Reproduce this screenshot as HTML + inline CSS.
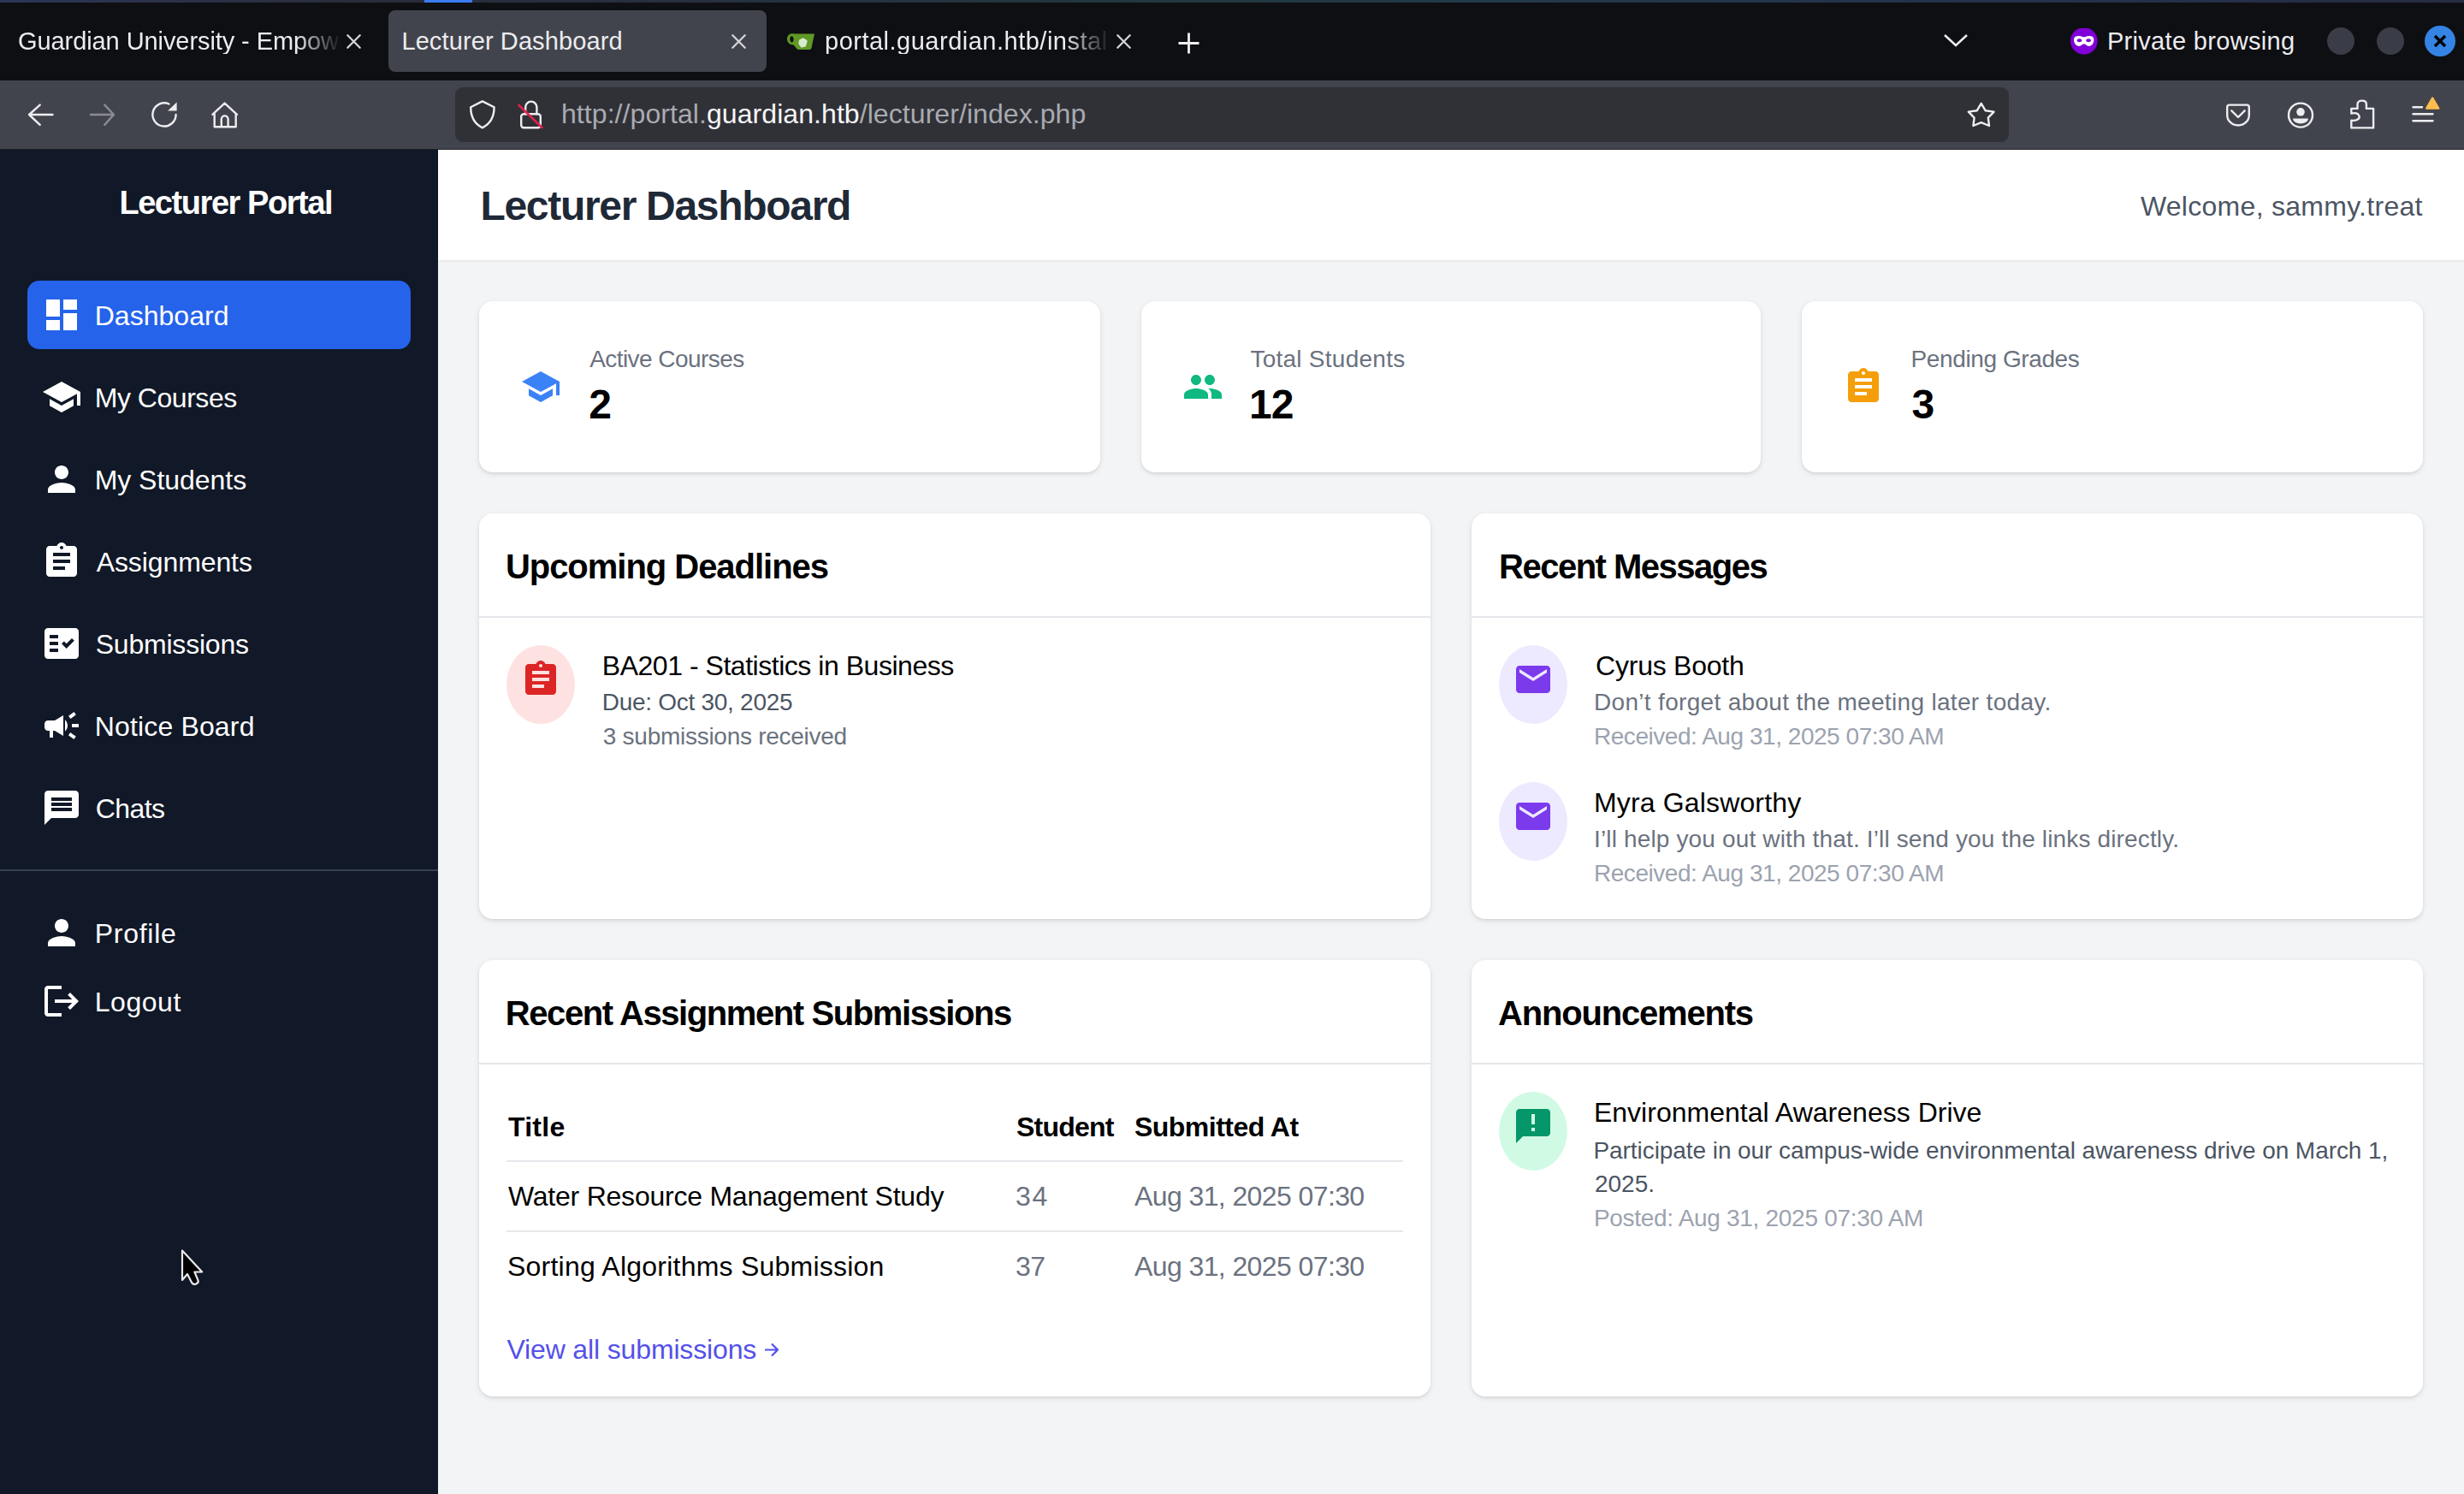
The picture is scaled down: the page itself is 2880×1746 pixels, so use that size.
<!DOCTYPE html>
<html><head><meta charset="utf-8">
<style>
*{box-sizing:border-box;margin:0;padding:0}
html,body{width:2880px;height:1746px;overflow:hidden;background:#f3f4f6;font-family:"Liberation Sans",sans-serif}
.abs{position:absolute}
.t{position:absolute;white-space:nowrap;line-height:1}
svg{display:block}
/* chrome */
#topstrip{left:0;top:0;width:2880px;height:3px;background:linear-gradient(90deg,#2b3556 0%,#2a2d3a 14%,#26303f 30%,#21393f 50%,#22394a 62%,#24324a 80%,#262c44 100%)}
#tabbar{left:0;top:3px;width:2880px;height:91px;background:#0e0f13}
#toolbar{left:0;top:94px;width:2880px;height:81px;background:#42444d}
#urlbar{left:532px;top:102px;width:1816px;height:64px;background:#303137;border-radius:9px}
/* sidebar */
#sidebar{left:0;top:175px;width:512px;height:1571px;background:#111827}
.nav{position:absolute;left:32px;width:448px;height:80px;border-radius:14px}
.nav.active{background:#2563eb}
.nav svg{position:absolute;left:16px;top:16px;width:48px;height:48px;fill:#fff}
.nav .lbl{position:absolute;left:79px;color:#fff;font-size:32px;line-height:1;white-space:nowrap}
/* main */
#header{left:512px;top:175px;width:2368px;height:129px;background:#fff;box-shadow:0 1px 3px rgba(0,0,0,.07)}
.card{position:absolute;background:#fff;border-radius:16px;box-shadow:0 2px 6px rgba(0,0,0,.1),0 2px 4px -2px rgba(0,0,0,.1)}
.card .hd{position:absolute;left:0;top:0;width:100%;height:122px;border-bottom:2px solid #e5e7eb}
.ttl{position:absolute;left:30px;font-size:40px;font-weight:bold;color:#000;white-space:nowrap;line-height:1}
.circ{position:absolute;width:80px;height:92px;border-radius:50%}
.circ svg{position:absolute;left:16px;top:16px;width:48px;height:48px}
@media (max-width:1500px){html{zoom:.5}}
</style></head>
<body>
<!-- ============ BROWSER CHROME ============ -->
<div id="topstrip" class="abs"></div>
<div class="abs" style="left:496px;top:0;width:56px;height:3px;background:#3b7cf6"></div>
<div id="tabbar" class="abs"></div>
<!-- tab1 -->
<div class="t" style="left:21px;top:34px;font-size:29px;color:#ececef;letter-spacing:-0.08px;width:378px;overflow:hidden;-webkit-mask-image:linear-gradient(90deg,#000 86%,transparent 100%)">Guardian University - Empowering</div>
<svg class="abs" style="left:403px;top:38px" width="21" height="21" viewBox="0 0 21 21"><path d="M3.3 3.3L17.7 17.7M17.7 3.3L3.3 17.7" stroke="#d4d4d8" stroke-width="2.3" stroke-linecap="round"/></svg>
<!-- tab2 active -->
<div class="abs" style="left:454px;top:12px;width:442px;height:72px;background:#42444d;border-radius:8px"></div>
<div id="tab2" class="t" style="left:469.4px;top:34px;font-size:29px;color:#ececef;letter-spacing:0.11px">Lecturer Dashboard</div>
<svg class="abs" style="left:853px;top:38px" width="21" height="21" viewBox="0 0 21 21"><path d="M3.3 3.3L17.7 17.7M17.7 3.3L3.3 17.7" stroke="#d4d4d8" stroke-width="2.3" stroke-linecap="round"/></svg>
<!-- tab3 -->
<svg class="abs" style="left:918px;top:36px" width="36" height="26" viewBox="0 0 36 26"><path fill="#609926" fill-rule="evenodd" d="M8 3.3C4.6 3.3 2 6 2 9.6 2 13.6 5 16.4 9.6 16.6L13.5 21.2C14.2 21.8 15 22 16 22H28C29.3 22 30.2 21.2 30.5 20L34 3.6H11.5C10.5 3.4 9.3 3.3 8 3.3zM7.3 6.2C8.6 6.2 9.6 8 9.6 10.1S8.8 13.6 7.6 13.6 5.3 11.9 5.3 9.8 6 6.2 7.3 6.2z"/><path d="M17 11.5L20.5 9.5L24.5 12L23 17.5L19 18.5L16.5 15z" fill="#d9ebcf" stroke="#d9ebcf" stroke-width="2.2" stroke-linejoin="round"/></svg>
<div class="t" style="left:964px;top:34px;font-size:29px;color:#ececef;letter-spacing:0.5px;width:334px;overflow:hidden;-webkit-mask-image:linear-gradient(90deg,#000 84%,transparent 100%)">portal.guardian.htb/installer</div>
<svg class="abs" style="left:1303px;top:38px" width="21" height="21" viewBox="0 0 21 21"><path d="M3.3 3.3L17.7 17.7M17.7 3.3L3.3 17.7" stroke="#d4d4d8" stroke-width="2.3" stroke-linecap="round"/></svg>
<svg class="abs" style="left:1376px;top:37px" width="27" height="27" viewBox="0 0 27 27"><path d="M13.5 1.5V25.5M1.5 13.5H25.5" stroke="#f0f0f2" stroke-width="2.8"/></svg>
<!-- right side -->
<svg class="abs" style="left:2271px;top:38px" width="30" height="18" viewBox="0 0 30 18"><path d="M2 3L15 15L28 3" stroke="#ececef" stroke-width="2.6" fill="none"/></svg>
<svg class="abs" style="left:2420px;top:33px" width="32" height="32" viewBox="0 0 32 32"><circle cx="15.8" cy="14.9" r="15.8" fill="#8000d7"/><path fill="#fff" fill-rule="evenodd" d="M4 13.5C4 10 6.5 8.9 10 8.9 13 8.9 14 10.3 15.8 10.3S18.6 8.9 21.6 8.9C25 8.9 27.4 10 27.4 13.5 27.4 17.5 25 20.9 21.6 20.9 18.8 20.9 17.8 18.3 15.8 18.3S12.8 20.9 10 20.9C6.6 20.9 4 17.5 4 13.5zM10.5 12.3C8.9 12.3 7.6 13.2 7.6 14.3S8.9 16.3 10.5 16.3 13.4 15.4 13.4 14.3 12.1 12.3 10.5 12.3zM21.1 12.3C19.5 12.3 18.2 13.2 18.2 14.3S19.5 16.3 21.1 16.3 24 15.4 24 14.3 22.7 12.3 21.1 12.3z"/></svg>
<div id="priv" class="t" style="left:2462.9px;top:34px;font-size:29px;color:#ececef;letter-spacing:0.32px">Private browsing</div>
<div class="abs" style="left:2720px;top:32px;width:32px;height:32px;border-radius:50%;background:#3a3c47"></div>
<div class="abs" style="left:2778px;top:32px;width:32px;height:32px;border-radius:50%;background:#3a3c47"></div>
<div class="abs" style="left:2834px;top:30px;width:36px;height:36px;border-radius:50%;background:#3584e4"></div>
<svg class="abs" style="left:2834px;top:30px" width="36" height="36" viewBox="0 0 36 36"><path d="M12 12L24 24M24 12L12 24" stroke="#000" stroke-width="3.4"/></svg>

<div id="toolbar" class="abs"></div>
<div class="abs" style="left:0;top:174px;width:2880px;height:1px;background:#1f2026"></div>
<div id="urlbar" class="abs"></div>
<svg class="abs" style="left:0;top:94px" width="2880" height="81" viewBox="0 94 2880 81">
<g stroke="#ededf0" stroke-width="2.4" fill="none" stroke-linecap="round" stroke-linejoin="round">
<path d="M34 134H61.5M46.7 122.6L34 134L46.7 145.9"/>
<path d="M133 134H106M122.3 122.6L133 134L122.3 145.9" stroke="#8b8c92"/>
<path d="M205.6 134A13.6 13.6 0 1 1 197.5 121.5"/>
<path d="M250.7 133.5V148.2H275.7V133.5M248.4 133.8L262.6 120.6L277 133.8M258.8 148.2V139.3A3.9 3.9 0 0 1 266.6 139.3V148.2"/>
<path d="M563.8 118.4L550.2 125.3C550.2 137 554 144.5 563.8 149.3C573.6 144.5 577.6 137 577.6 125.3Z"/>
<rect x="609.2" y="133.2" width="22.6" height="16" rx="3"/>
<path d="M614.2 133.2V125.2A6.6 6.6 0 0 1 627.4 125.2V133.2"/>
<path d="M2315.7 120.9L2320.6 129.2L2330.6 130.6L2323.8 137.7L2325 147L2315.7 143.2L2306.4 147L2307.6 137.7L2300.8 130.6L2310.8 129.2Z"/>
<path d="M2603.2 125A2.5 2.5 0 0 1 2605.7 122.6H2626.3A2.5 2.5 0 0 1 2628.8 125V134.5A12.8 12 0 0 1 2603.2 134.5Z"/>
<path d="M2608.3 129.3L2616 137L2623.7 129.3"/>
<circle cx="2689" cy="134.6" r="14"/>
<path d="M2748.3 149.4V140.8C2755 141.5 2758.5 138.5 2757.5 135.6C2756.5 132.8 2753 131.5 2748.3 132.6V126.9H2755.5V121.8C2755.5 119 2758 117.6 2760.7 117.6C2763.5 117.6 2765.9 119 2765.9 121.8V126.9H2774.1V149.4Z"/>
<path d="M2820.5 125.3H2831M2820.5 133.3H2843.5M2820.5 141.2H2843.5"/>
</g>
<path d="M196.1 129.4L206.6 119.6V129.4Z" fill="#ededf0"/>
<path d="M606.3 122.8L633.5 149" stroke="#e0234a" stroke-width="2.6" stroke-linecap="round"/>
<circle cx="2689" cy="130.8" r="4.8" fill="#ededf0"/>
<path d="M2680 138.4H2698A9 6.2 0 0 1 2680 138.4Z" fill="#ededf0"/>
<path d="M2843.2 114.6L2850.2 126.6H2836.2Z" fill="#ffbd4f" stroke="#ffbd4f" stroke-width="2.4" stroke-linejoin="round"/>
</svg>
<div id="url" class="t" style="left:656px;top:117px;font-size:32px;color:#a9aab0;letter-spacing:0.07px">http://portal.<span style="color:#f6f6f8">guardian.htb</span>/lecturer/index.php</div>

<!-- ============ SIDEBAR ============ -->
<div id="sidebar" class="abs"></div>
<div id="lp" class="t" style="left:139.4px;top:218px;font-size:38px;font-weight:bold;color:#fff;letter-spacing:-1.44px">Lecturer Portal</div>
<div class="nav active" style="top:328px"><svg viewBox="0 0 24 24"><path d="M3 13h8V3H3v10zm0 8h8v-6H3v6zm10 0h8V11h-8v10zm0-18v6h8V3h-8z"/></svg><div id="n_dash" class="lbl" style="top:25px;left:78.7px;letter-spacing:0.03px">Dashboard</div></div>
<div class="nav" style="top:424px"><svg viewBox="0 0 24 24"><path d="M5 13.18v4L12 21l7-3.82v-4L12 17l-7-3.82zM12 3L1 9l11 6 9-4.91V17h2V9L12 3z"/></svg><div id="n_cour" class="lbl" style="top:25px;left:78.7px;letter-spacing:-0.46px">My Courses</div></div>
<div class="nav" style="top:520px"><svg viewBox="0 0 24 24"><path d="M12 12c2.21 0 4-1.79 4-4s-1.79-4-4-4-4 1.79-4 4 1.79 4 4 4zm0 2c-2.67 0-8 1.34-8 4v2h16v-2c0-2.66-5.33-4-8-4z"/></svg><div id="n_stud" class="lbl" style="top:25px;left:78.7px;letter-spacing:-0.04px">My Students</div></div>
<div class="nav" style="top:616px"><svg viewBox="0 0 24 24"><path d="M19 3h-4.18C14.4 1.84 13.3 1 12 1c-1.3 0-2.4.84-2.82 2H5c-1.1 0-2 .9-2 2v14c0 1.1.9 2 2 2h14c1.1 0 2-.9 2-2V5c0-1.1-.9-2-2-2zm-7 0c.55 0 1 .45 1 1s-.45 1-1 1-1-.45-1-1 .45-1 1-1zm2 14H7v-2h7v2zm3-4H7v-2h10v2zm0-4H7V7h10v2z"/></svg><div id="n_asg" class="lbl" style="top:25px;left:80.7px;letter-spacing:-0.1px">Assignments</div></div>
<div class="nav" style="top:712px"><svg viewBox="0 0 24 24"><path d="M20 3H4c-1.1 0-2 .9-2 2v14c0 1.1.9 2 2 2h16c1.1 0 2-.9 2-2V5c0-1.1-.9-2-2-2zM10 17H5v-2h5v2zm0-4H5v-2h5v2zm0-4H5V7h5v2zm4.82 6L12 12.16l1.41-1.41 1.41 1.42L17.99 9l1.42 1.42L14.82 15z"/></svg><div id="n_sub" class="lbl" style="top:25px;left:79.7px;letter-spacing:-0.21px">Submissions</div></div>
<div class="nav" style="top:808px"><svg viewBox="0 0 24 24"><path d="M18 11v2h4v-2h-4zm-2 6.61c.96.71 2.21 1.65 3.2 2.39.4-.53.8-1.07 1.2-1.6-.99-.74-2.24-1.68-3.2-2.4-.4.54-.8 1.08-1.2 1.61zM20.4 5.6c-.4-.53-.8-1.07-1.2-1.6-.99.74-2.24 1.680-3.2 2.4.4.53.8 1.07 1.2 1.6.96-.72 2.21-1.65 3.2-2.4zM4 9c-1.1 0-2 .9-2 2v2c0 1.1.9 2 2 2h1v4h2v-4h1l5 3V6L8 9H4zm11.5 3c0-1.33-.58-2.53-1.5-3.35v6.69c.92-.81 1.5-2.01 1.5-3.34z"/></svg><div id="n_not" class="lbl" style="top:25px;left:78.7px;letter-spacing:0.16px">Notice Board</div></div>
<div class="nav" style="top:904px"><svg viewBox="0 0 24 24"><path d="M20 2H4c-1.1 0-1.99.9-1.99 2L2 22l4-4h14c1.1 0 2-.9 2-2V4c0-1.1-.9-2-2-2zm-2 12H6v-2h12v2zm0-3H6V9h12v2zm0-3H6V6h12v2z"/></svg><div id="n_chat" class="lbl" style="top:25px;left:79.7px;letter-spacing:-0.55px">Chats</div></div>
<div class="abs" style="left:0;top:1016px;width:512px;height:2px;background:#374151"></div>
<div class="nav" style="top:1050px"><svg viewBox="0 0 24 24"><path d="M12 12c2.21 0 4-1.79 4-4s-1.79-4-4-4-4 1.79-4 4 1.79 4 4 4zm0 2c-2.67 0-8 1.34-8 4v2h16v-2c0-2.66-5.33-4-8-4z"/></svg><div id="n_prof" class="lbl" style="top:25px;left:78.7px;letter-spacing:0.73px">Profile</div></div>
<div class="nav" style="top:1130px"><svg viewBox="0 0 24 24"><path d="M17 7l-1.41 1.41L18.17 11H8v2h10.17l-2.58 2.58L17 17l5-5zM4 5h8V3H4c-1.1 0-2 .9-2 2v14c0 1.1.9 2 2 2h8v-2H4V5z"/></svg><div id="n_out" class="lbl" style="top:25px;left:78.7px;letter-spacing:0.56px">Logout</div></div>
<!-- cursor -->
<svg class="abs" style="left:210px;top:1459px" width="30" height="44" viewBox="0 0 30 44"><path d="M3 2.5V37L9 30L14.3 40.2Q15.8 42.6 18.8 41.6L20 41Q22.4 39.6 21.4 37.2L17.4 27.5H26.2Z" fill="#000" stroke="#e8e8ea" stroke-width="2.2" stroke-linejoin="round"/></svg>

<!-- ============ HEADER ============ -->
<div id="header" class="abs"></div>
<div id="h1" class="t" style="left:561.4px;top:217px;font-size:48px;font-weight:bold;color:#1f2937;letter-spacing:-1.3px">Lecturer Dashboard</div>
<div id="welcome" class="t" style="left:2501.9px;top:225px;font-size:32px;color:#4b5563;letter-spacing:0.28px">Welcome, sammy.treat</div>

<!-- ============ STAT CARDS ============ -->
<div class="card" style="left:560px;top:352px;width:726px;height:200px">
  <svg class="abs" style="left:48px;top:76px;fill:#3b82f6" width="48" height="48" viewBox="0 0 24 24"><path d="M5 13.18v4L12 21l7-3.82v-4L12 17l-7-3.82zM12 3L1 9l11 6 9-4.91V17h2V9L12 3z"/></svg>
  <div id="ac" class="t" style="left:129.2px;top:54px;font-size:28px;color:#6b7280;letter-spacing:-0.56px">Active Courses</div>
  <div id="num2" class="t" style="left:128.2px;top:97px;font-size:48px;font-weight:bold;color:#000;letter-spacing:4px">2</div>
</div>
<div class="card" style="left:1334px;top:352px;width:724px;height:200px">
  <svg class="abs" style="left:48px;top:76px;fill:#10b981" width="48" height="48" viewBox="0 0 24 24"><path d="M16 11c1.66 0 2.99-1.34 2.99-3S17.66 5 16 5c-1.66 0-3 1.34-3 3s1.34 3 3 3zm-8 0c1.66 0 2.99-1.34 2.99-3S9.66 5 8 5C6.34 5 5 6.340 5 8s1.34 3 3 3zm0 2c-2.33 0-7 1.17-7 3.5V19h14v-2.5c0-2.33-4.67-3.5-7-3.5zm8 0c-.29 0-.62.02-.97.05 1.16.84 1.97 1.97 1.97 3.45V19h6v-2.5c0-2.33-4.67-3.5-7-3.5z"/></svg>
  <div id="ts" class="t" style="left:127.4px;top:54px;font-size:28px;color:#6b7280;letter-spacing:0.26px">Total Students</div>
  <div id="num12" class="t" style="left:126px;top:97px;font-size:48px;font-weight:bold;color:#000;letter-spacing:-1px">12</div>
</div>
<div class="card" style="left:2106px;top:352px;width:726px;height:200px">
  <svg class="abs" style="left:48px;top:76px;fill:#f59e0b" width="48" height="48" viewBox="0 0 24 24"><path d="M19 3h-4.18C14.4 1.84 13.3 1 12 1c-1.3 0-2.4.84-2.82 2H5c-1.1 0-2 .9-2 2v14c0 1.1.9 2 2 2h14c1.1 0 2-.9 2-2V5c0-1.1-.9-2-2-2zm-7 0c.55 0 1 .45 1 1s-.45 1-1 1-1-.45-1-1 .45-1 1-1zm2 14H7v-2h7v2zm3-4H7v-2h10v2zm0-4H7V7h10v2z"/></svg>
  <div id="pg" class="t" style="left:127.6px;top:54px;font-size:28px;color:#6b7280;letter-spacing:-0.4px">Pending Grades</div>
  <div id="num3" class="t" style="left:128.6px;top:97px;font-size:48px;font-weight:bold;color:#000;letter-spacing:0.6px">3</div>
</div>

<!-- ============ ROW 2 ============ -->
<div class="card" style="left:560px;top:600px;width:1112px;height:474px">
  <div class="hd"></div>
  <div id="up" class="ttl" style="top:42px;letter-spacing:-1.03px;left:30.9px">Upcoming Deadlines</div>
  <div class="circ" style="left:32px;top:154px;background:#fee2e2"><svg viewBox="0 0 24 24" style="fill:#dc2626"><path d="M19 3h-4.18C14.4 1.84 13.3 1 12 1c-1.3 0-2.4.84-2.82 2H5c-1.1 0-2 .9-2 2v14c0 1.1.9 2 2 2h14c1.1 0 2-.9 2-2V5c0-1.1-.9-2-2-2zm-7 0c.55 0 1 .45 1 1s-.45 1-1 1-1-.45-1-1 .45-1 1-1zm2 14H7v-2h7v2zm3-4H7v-2h10v2zm0-4H7V7h10v2z"/></svg></div>
  <div id="ba" class="t" style="left:143.8px;top:162px;font-size:32px;color:#000;letter-spacing:-0.47px">BA201 - Statistics in Business</div>
  <div id="due" class="t" style="left:143.8px;top:207px;font-size:28px;color:#4b5563;letter-spacing:-0.28px">Due: Oct 30, 2025</div>
  <div id="subr" class="t" style="left:144.8px;top:247px;font-size:28px;color:#6b7280;letter-spacing:-0.27px">3 submissions received</div>
</div>
<div class="card" style="left:1720px;top:600px;width:1112px;height:474px">
  <div class="hd"></div>
  <div id="rm" class="ttl" style="top:42px;letter-spacing:-1.51px;left:32.1px">Recent Messages</div>
  <div class="circ" style="left:32px;top:154px;background:#ede9fe"><svg viewBox="0 0 24 24" style="fill:#7c3aed"><path d="M20 4H4c-1.1 0-1.99.9-1.99 2L2 18c0 1.1.9 2 2 2h16c1.1 0 2-.9 2-2V6c0-1.1-.9-2-2-2zm0 4l-8 5-8-5V6l8 5 8-5v2z"/></svg></div>
  <div id="cy" class="t" style="left:145.1px;top:162px;font-size:32px;color:#000;letter-spacing:-0.24px">Cyrus Booth</div>
  <div id="dont" class="t" style="left:143px;top:207px;font-size:28px;color:#6b7280;letter-spacing:0.32px">Don’t forget about the meeting later today.</div>
  <div id="rec1" class="t" style="left:143px;top:247px;font-size:28px;color:#9ca3af;letter-spacing:-0.46px">Received: Aug 31, 2025 07:30 AM</div>
  <div class="circ" style="left:32px;top:314px;background:#ede9fe"><svg viewBox="0 0 24 24" style="fill:#7c3aed"><path d="M20 4H4c-1.1 0-1.99.9-1.99 2L2 18c0 1.1.9 2 2 2h16c1.1 0 2-.9 2-2V6c0-1.1-.9-2-2-2zm0 4l-8 5-8-5V6l8 5 8-5v2z"/></svg></div>
  <div id="myra" class="t" style="left:143px;top:322px;font-size:32px;color:#000;letter-spacing:0.15px">Myra Galsworthy</div>
  <div id="ill" class="t" style="left:143px;top:367px;font-size:28px;color:#6b7280;letter-spacing:0.15px">I’ll help you out with that. I’ll send you the links directly.</div>
  <div id="rec2" class="t" style="left:143px;top:407px;font-size:28px;color:#9ca3af;letter-spacing:-0.46px">Received: Aug 31, 2025 07:30 AM</div>
</div>

<!-- ============ ROW 3 ============ -->
<div class="card" style="left:560px;top:1122px;width:1112px;height:510px">
  <div class="hd"></div>
  <div id="ras" class="ttl" style="top:42px;letter-spacing:-1.41px;left:30.8px">Recent Assignment Submissions</div>
  <div id="th1" class="t" style="left:34px;top:179px;font-size:32px;font-weight:bold;color:#000;letter-spacing:0.25px">Title</div>
  <div id="th2" class="t" style="left:628px;top:179px;font-size:32px;font-weight:bold;color:#000;letter-spacing:-0.78px">Student</div>
  <div id="th3" class="t" style="left:766px;top:179px;font-size:32px;font-weight:bold;color:#000;letter-spacing:-0.53px">Submitted At</div>
  <div class="abs" style="left:32px;top:234px;width:1048px;height:2px;background:#e5e7eb"></div>
  <div id="r1c1" class="t" style="left:34px;top:260px;font-size:32px;color:#000;letter-spacing:-0.23px">Water Resource Management Study</div>
  <div id="r1c2" class="t" style="left:627px;top:260px;font-size:32px;color:#6b7280;letter-spacing:1.7px">34</div>
  <div id="r1c3" class="t" style="left:766px;top:260px;font-size:32px;color:#6b7280;letter-spacing:-0.6px">Aug 31, 2025 07:30</div>
  <div class="abs" style="left:32px;top:316px;width:1048px;height:2px;background:#e5e7eb"></div>
  <div id="r2c1" class="t" style="left:33px;top:342px;font-size:32px;color:#000;letter-spacing:0.23px">Sorting Algorithms Submission</div>
  <div id="r2c2" class="t" style="left:627px;top:342px;font-size:32px;color:#6b7280;letter-spacing:-0.5px">37</div>
  <div id="r2c3" class="t" style="left:766px;top:342px;font-size:32px;color:#6b7280;letter-spacing:-0.6px">Aug 31, 2025 07:30</div>
  <div id="view" class="t" style="left:32.4px;top:439px;font-size:32px;color:#5450ea;letter-spacing:-0.14px">View all submissions</div><svg class="abs" style="left:332px;top:446px" width="20" height="19" viewBox="0 0 20 19"><path d="M2 9.5H17M10 2.5L17 9.5L10 16.5" stroke="#5450ea" stroke-width="2.2" fill="none"/></svg>
</div>
<div class="card" style="left:1720px;top:1122px;width:1112px;height:510px">
  <div class="hd"></div>
  <div id="ann" class="ttl" style="top:42px;letter-spacing:-1.2px;left:31.1px">Announcements</div>
  <div class="circ" style="left:32px;top:154px;background:#d1fae5"><svg viewBox="0 0 24 24" style="fill:#059669"><path d="M20 2H4c-1.1 0-1.99.9-1.99 2L2 22l4-4h14c1.1 0 2-.9 2-2V4c0-1.1-.9-2-2-2zm-7 9h-2V5h2v6zm0 4h-2v-2h2v2z"/></svg></div>
  <div id="env" class="t" style="left:142.9px;top:162px;font-size:32px;color:#000;letter-spacing:0.02px">Environmental Awareness Drive</div>
  <div id="part" class="t" style="left:142.5px;top:209px;font-size:28px;color:#4b5563;letter-spacing:-0.07px">Participate in our campus-wide environmental awareness drive on March 1,</div>
  <div id="y2025" class="t" style="left:143.9px;top:248px;font-size:28px;color:#4b5563;letter-spacing:0.02px">2025.</div>
  <div id="posted" class="t" style="left:142.9px;top:288px;font-size:28px;color:#9ca3af;letter-spacing:-0.3px">Posted: Aug 31, 2025 07:30 AM</div>
</div>

</body></html>
